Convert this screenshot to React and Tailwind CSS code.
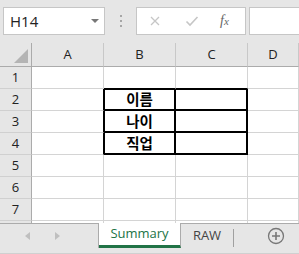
import React from "react";

const font = { fontFamily: '"Open Sans", "Noto Sans CJK KR", sans-serif' };

const cols = ["A", "B", "C", "D"];
const labels = { 2: "이름", 3: "나이", 4: "직업" };

// border classes for the outlined block B2:C4 (2px black lines)
const cellBorder = (r, c) => {
  const inBox = r >= 2 && r <= 4 && (c === "B" || c === "C");
  if (inBox) {
    if (c === "B" && r === 2)
      return "border-r border-b border-black shadow-[inset_1px_1px_0_#000,inset_-1px_-1px_0_#000]";
    if (c === "B")
      return "border-r border-b border-black shadow-[inset_1px_0_0_#000,inset_-1px_-1px_0_#000]";
    if (r === 2)
      return "border-r border-b border-black shadow-[inset_0_1px_0_#000,inset_-1px_-1px_0_#000]";
    return "border-r border-b border-black shadow-[inset_-1px_-1px_0_#000]";
  }
  if (c === "A" && r >= 2 && r <= 4) return "border-r border-r-black border-b border-b-[#d4d4d4]";
  if (r === 1 && (c === "B" || c === "C")) return "border-r border-r-[#d4d4d4] border-b border-b-black";
  return "border-r border-b border-[#d4d4d4]";
};

const FormulaBar = () => (
  <div className="h-[43px] bg-[#e6e6e6] flex items-start pt-[7px]">
    {/* name box */}
    <div className="ml-[3px] w-[102px] h-[28px] bg-white border border-[#c6c6c6] flex items-center pl-[6px] pr-[5px]">
      <span className="text-[15px] text-[#222] flex-1 leading-none">H14</span>
      <div className="w-0 h-0 border-l-[4px] border-r-[4px] border-t-[4px] border-l-transparent border-r-transparent border-t-[#777]" />
    </div>
    {/* drag dots */}
    <div className="w-[31px] h-[28px] flex flex-col items-center justify-center gap-[3px]">
      <div className="w-[2px] h-[2px] bg-[#a6a6a6]" />
      <div className="w-[2px] h-[2px] bg-[#a6a6a6]" />
      <div className="w-[2px] h-[2px] bg-[#a6a6a6]" />
    </div>
    {/* cancel / enter / fx */}
    <div className="w-[110px] h-[28px] bg-white border border-[#c6c6c6] flex items-center">
      <svg width="12" height="12" viewBox="0 0 12 12" className="ml-[12px]">
        <path d="M2 2 L10 10 M10 2 L2 10" stroke="#c6c6c6" strokeWidth="1.3" />
      </svg>
      <svg width="14" height="12" viewBox="0 0 14 12" className="ml-[24px]">
        <path d="M1.5 6.5 L5 10 L12.5 2" stroke="#c6c6c6" strokeWidth="1.6" fill="none" />
      </svg>
      <span
        className="ml-[21px] text-[14px] italic text-[#666] leading-none"
        style={{ fontFamily: '"Liberation Serif", serif' }}
      >
        f<span className="text-[11px]">x</span>
      </span>
    </div>
    <div className="ml-[3px] flex-1 h-[28px] bg-white border border-[#c6c6c6] border-r-0" />
  </div>
);

const Sheet = () => {
  const rows = [1, 2, 3, 4, 5, 6, 7, 8];
  return (
    <div className="h-[180px] overflow-hidden bg-white grid grid-cols-[32px_72px_72px_72px_1fr] grid-rows-[24px_repeat(7,22px)_22px]">
      {/* corner */}
      <div className="bg-[#e6e6e6] border-r border-b border-[#ababab] flex items-end justify-end pr-[3px] pb-[3px]">
        <svg width="14" height="14" viewBox="0 0 14 14">
          <path d="M14 0 V14 H0 Z" fill="#b4b4b4" />
        </svg>
      </div>
      {cols.map((c) => (
        <div
          key={c}
          className="bg-[#e6e6e6] border-r border-r-[#c8c8c8] border-b border-b-[#ababab] flex items-center justify-center text-[13px] text-[#222]"
        >
          {c}
        </div>
      ))}
      {rows.map((r) => (
        <React.Fragment key={r}>
          {/* row 8 is only a sliver under the tab bar, its number is hidden */}
          <div className="bg-[#e6e6e6] border-r border-r-[#ababab] border-b border-b-[#d0d0d0] flex items-center justify-center text-[13px] text-[#222]">
            {r < 8 ? r : ""}
          </div>
          {cols.map((c) => (
            <div
              key={c}
              className={`${cellBorder(r, c)} flex items-center justify-center text-[14.5px] font-bold text-black`}
            >
              {c === "B" && labels[r] ? labels[r] : ""}
            </div>
          ))}
        </React.Fragment>
      ))}
    </div>
  );
};

const TabBar = () => (
  <div className="h-[31px] bg-[#e6e6e6] flex flex-col">
    <div className="h-[25px] flex">
      <div className="w-[99px] border-t border-r border-[#ababab] flex items-center">
        <div className="ml-[25px] w-0 h-0 border-t-[4px] border-b-[4px] border-r-[5px] border-t-transparent border-b-transparent border-r-[#bfbfbf]" />
        <div className="ml-[25px] w-0 h-0 border-t-[4px] border-b-[4px] border-l-[5px] border-t-transparent border-b-transparent border-l-[#bfbfbf]" />
      </div>
      <div className="w-[82px] bg-white border-r border-[#ababab] border-b-[3px] border-b-[#217346] flex items-center justify-center text-[13px] text-[#217346]">
        Summary
      </div>
      <div className="flex-1 border-t border-[#ababab] flex items-center">
        <div className="w-[52px] text-center text-[13px] text-[#444]">RAW</div>
        <div className="w-px h-[18px] bg-[#a0a0a0] mt-[4px]" />
        <svg width="18" height="18" viewBox="0 0 18 18" className="ml-[33px]">
          <circle cx="9" cy="9" r="7.5" fill="none" stroke="#777" strokeWidth="1.3" />
          <path d="M9 5 V13 M5 9 H13" stroke="#777" strokeWidth="1.6" />
        </svg>
      </div>
    </div>
    <div className="flex-1 border-b border-[#d0d0d0]" />
  </div>
);

export default function App() {
  return (
    <div className="w-[299px] h-[254px] overflow-hidden select-none" style={font}>
      <FormulaBar />
      <Sheet />
      <TabBar />
    </div>
  );
}
